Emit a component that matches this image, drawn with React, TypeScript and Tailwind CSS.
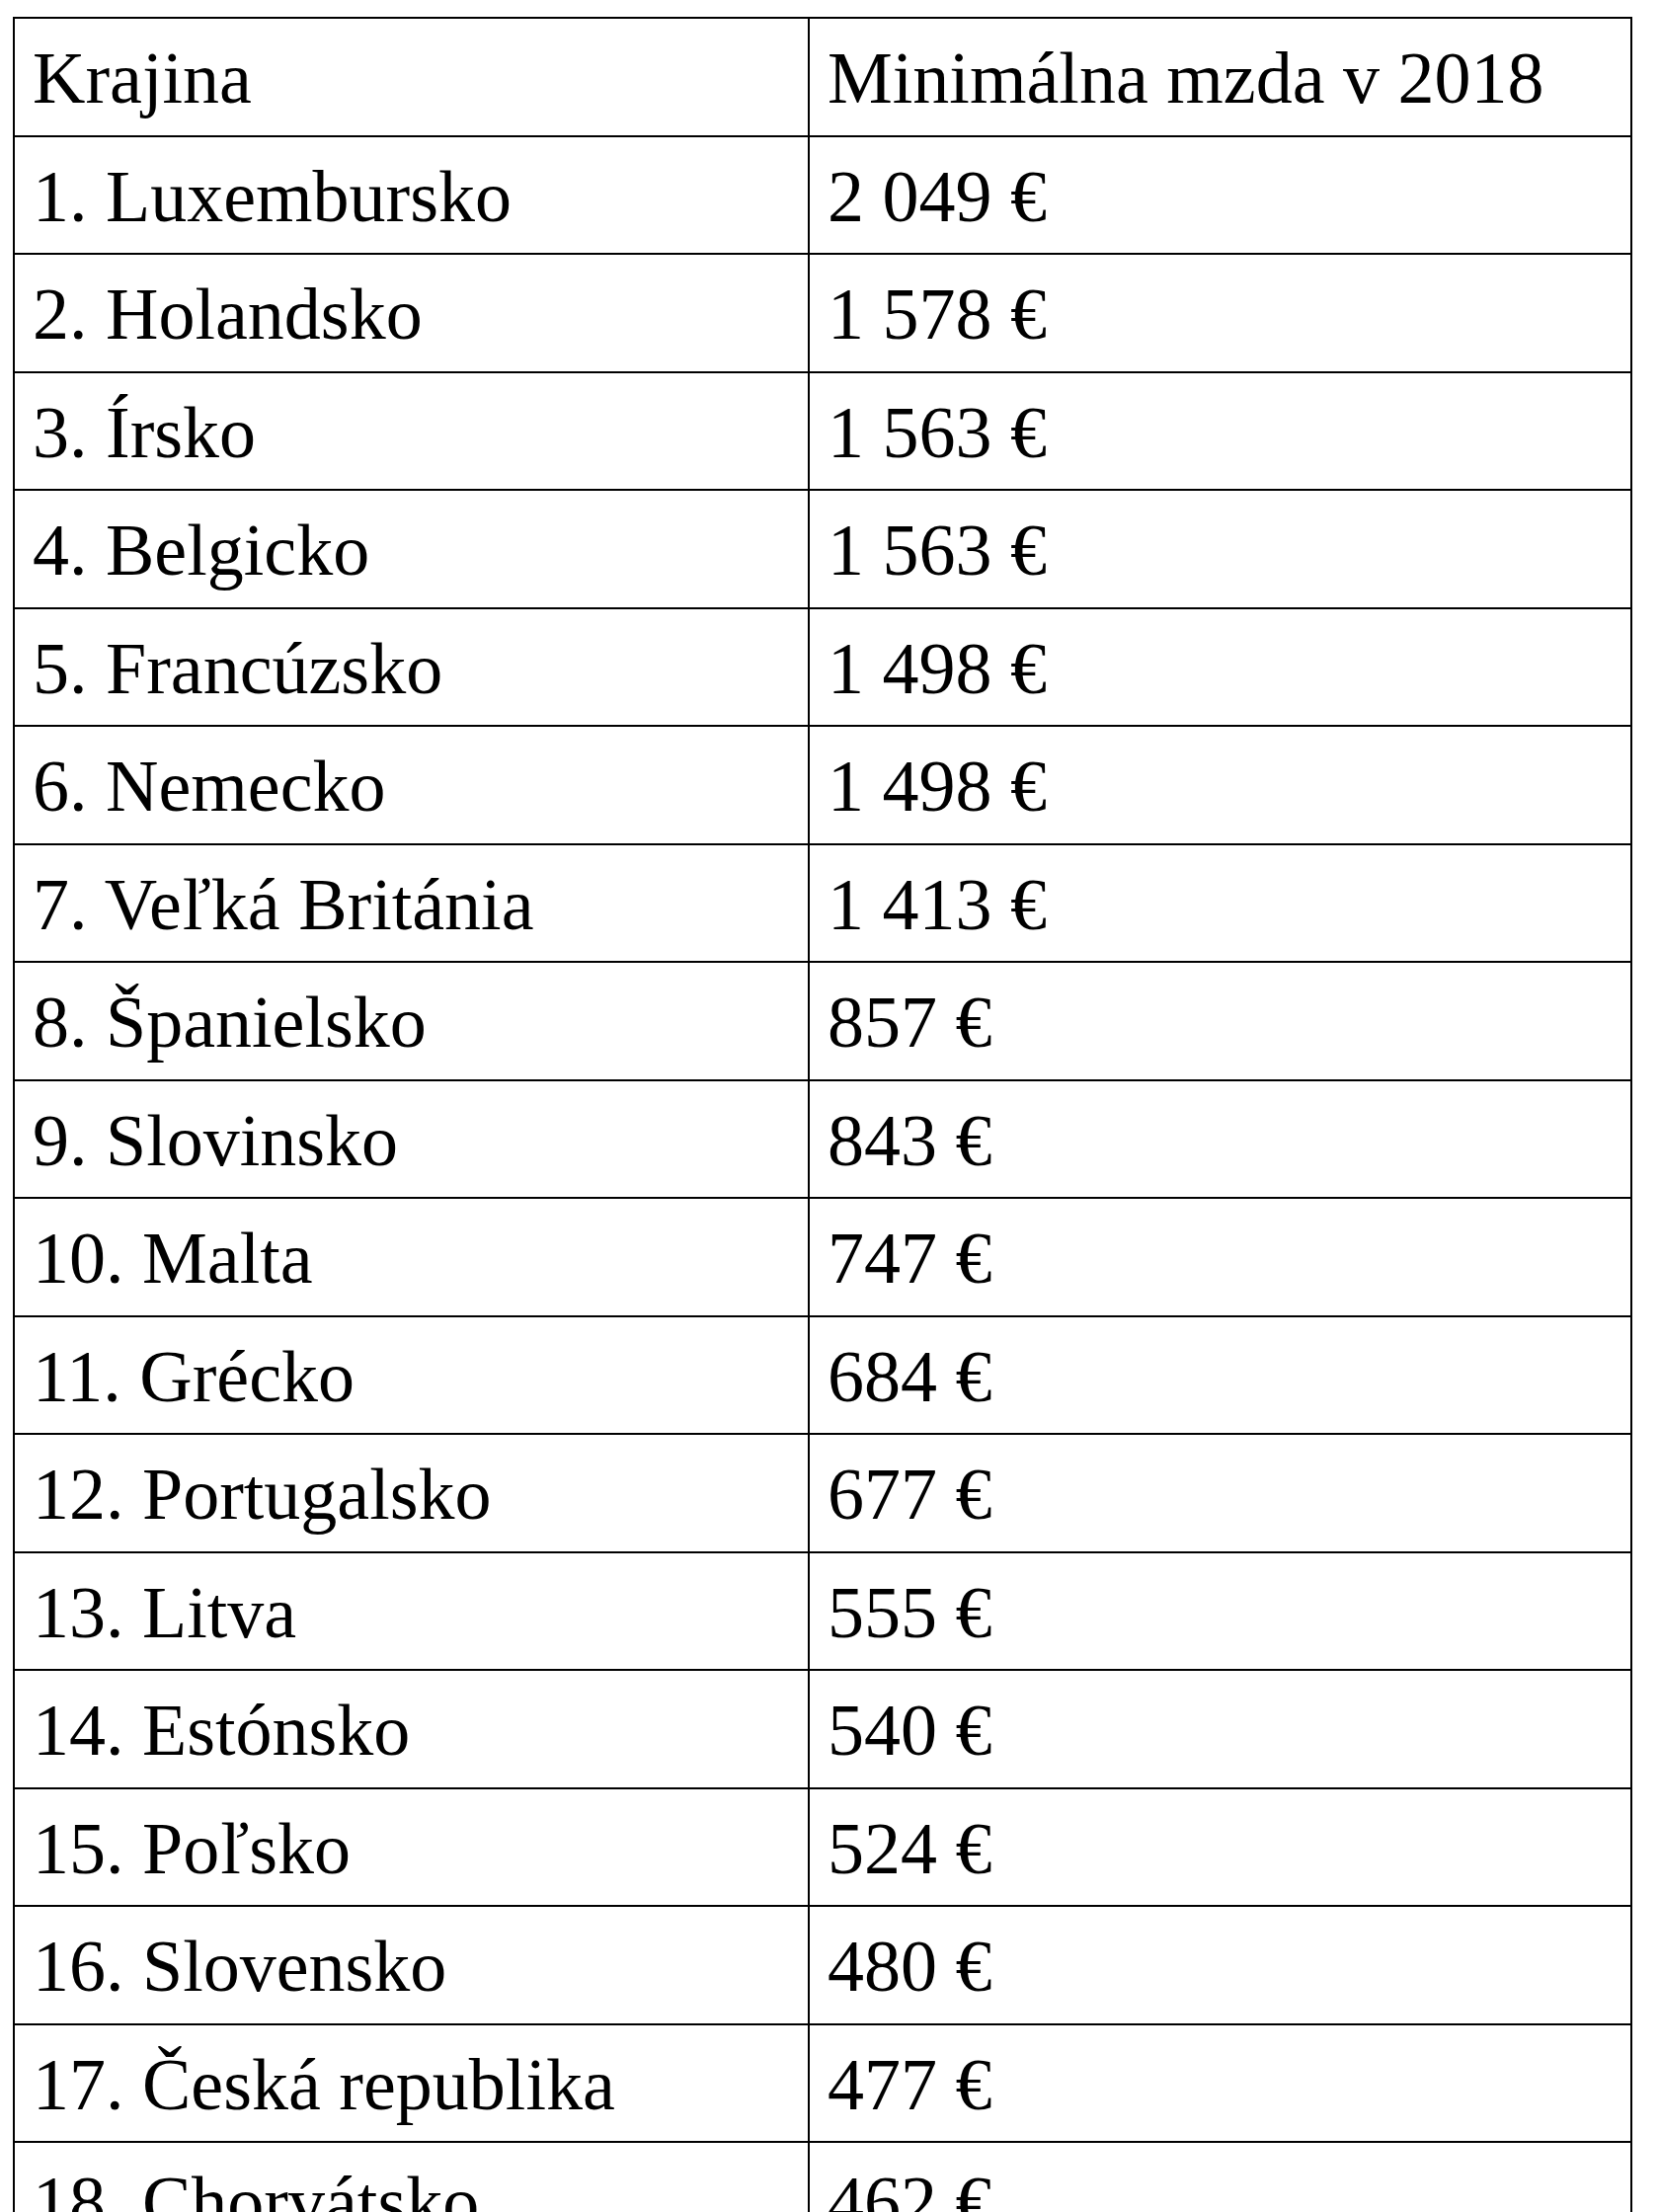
import React from "react";

const rows: [string, string][] = [
  ["1. Luxembursko", "2 049 €"],
  ["2. Holandsko", "1 578 €"],
  ["3. Írsko", "1 563 €"],
  ["4. Belgicko", "1 563 €"],
  ["5. Francúzsko", "1 498 €"],
  ["6. Nemecko", "1 498 €"],
  ["7. Veľká Británia", "1 413 €"],
  ["8. Španielsko", "857 €"],
  ["9. Slovinsko", "843 €"],
  ["10. Malta", "747 €"],
  ["11. Grécko", "684 €"],
  ["12. Portugalsko", "677 €"],
  ["13. Litva", "555 €"],
  ["14. Estónsko", "540 €"],
  ["15. Poľsko", "524 €"],
  ["16. Slovensko", "480 €"],
  ["17. Česká republika", "477 €"],
  ["18. Chorvátsko", "462 €"],
];

export default function App() {
  return (
    <div
      className="min-h-[2240px] bg-white pl-[13px] pt-[17px] text-black"
      style={{ fontFamily: '"Liberation Serif", "Times New Roman", serif' }}
    >
      <table className="w-[1640px] border-collapse border-2 border-black text-[74px] leading-[80px]">
        <tbody>
          <tr>
            <td className="w-[805px] whitespace-nowrap border-2 border-black pl-[18px] pr-[17px] pt-[20px] pb-[17.5px] align-top">
              Krajina
            </td>
            <td className="whitespace-nowrap border-2 border-black pl-[18px] pr-[17px] pt-[20px] pb-[17.5px] align-top">
              Minimálna mzda v 2018
            </td>
          </tr>
          {rows.map(([c, v]) => (
            <tr key={c}>
              <td className="w-[805px] whitespace-nowrap border-2 border-black pl-[18px] pr-[17px] pt-[20px] pb-[17.5px] align-top">
                {c}
              </td>
              <td className="whitespace-nowrap border-2 border-black pl-[18px] pr-[17px] pt-[20px] pb-[17.5px] align-top">
                {v}
              </td>
            </tr>
          ))}
        </tbody>
      </table>
    </div>
  );
}
